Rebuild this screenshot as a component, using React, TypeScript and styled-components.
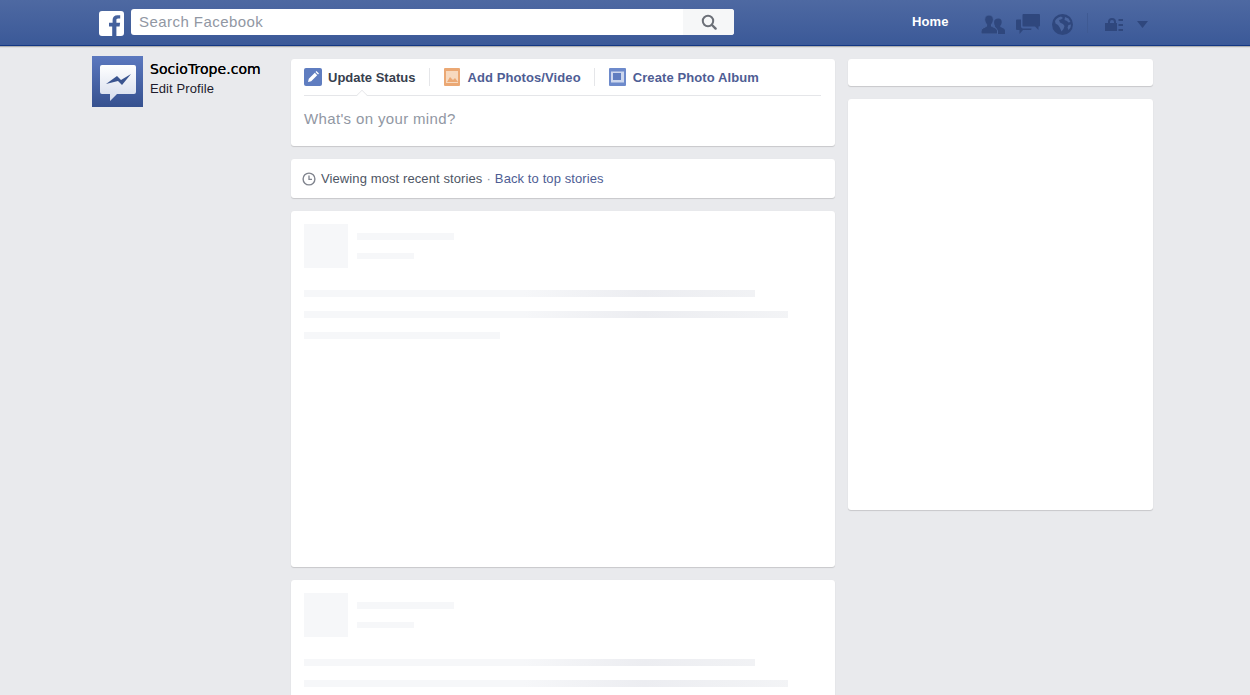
import React from 'react';
import styled, { createGlobalStyle } from 'styled-components';

const GlobalStyle = createGlobalStyle`
    html, body {
        margin: 0;
        padding: 0;
        background: #e9eaed;
        font-family: "Liberation Sans", Arial, sans-serif;
    }
`;

const Shell = styled.div`
    height: 695px;
    overflow: hidden;
`;

const Header = styled.header`
    height: 45px;
    padding-left: 99px;
    display: flex;
    align-items: center;
    background: linear-gradient(#4e69a2, #3b5998);
    border-bottom: 1px solid #133783;
    box-shadow: 0 1px 1px rgba(0, 0, 0, 0.25);
`;

const LogoWrap = styled.div`
    width: 25px;
    height: 25px;
    margin-top: 2px;
    margin-right: 7px;
`;

const Search = styled.div`
    width: 603px;
    height: 26px;
    margin-top: -1px;
    display: flex;
    background: #fff;
    border-radius: 3px;
    overflow: hidden;
`;

const SearchText = styled.div`
    flex: 1;
    padding-left: 8px;
    font-size: 15px;
    line-height: 26px;
    letter-spacing: 0.45px;
    color: #9197a3;
`;

const SearchButton = styled.div`
    width: 51px;
    display: flex;
    align-items: center;
    justify-content: center;
    background: #f6f7f8;
`;

const NavLink = styled.div`
    margin-left: 178px;
    margin-top: -3px;
    width: 69px;
    font-size: 13px;
    font-weight: bold;
    letter-spacing: 0.1px;
    color: #fff;
`;

const NavIcon = styled.div<{ $w: number; $gap: number }>`
    width: ${(p) => p.$w}px;
    margin-top: 3px;
    margin-right: ${(p) => p.$gap}px;
    display: flex;
    align-items: center;
    justify-content: center;
`;

const NavDivider = styled.div`
    width: 1px;
    height: 20px;
    margin-left: 14px;
    margin-right: 17px;
    background: #3f5a93;
`;

const Page = styled.main`
    display: grid;
    grid-template-columns: 186px 544px 305px;
    column-gap: 13px;
    padding: 10px 0 0 92px;
`;

const Sidebar = styled.aside`
    display: flex;
    gap: 7px;
`;

const Avatar = styled.div`
    width: 51px;
    height: 51px;
    padding-top: 2px;
    box-sizing: border-box;
    display: flex;
    align-items: center;
    justify-content: center;
    background: linear-gradient(#5b78bf, #36518f);
`;

const ProfileName = styled.div`
    font-family: "DejaVu Sans", Verdana, sans-serif;
    font-size: 14px;
    line-height: 16px;
    letter-spacing: 0.06px;
    margin-top: 5px;
    color: #000;
    text-shadow: 0 0 0.4px #000;
`;

const ProfileLink = styled.div`
    font-size: 13px;
    line-height: 15px;
    margin-top: 4px;
    letter-spacing: 0.1px;
    color: #1d1a2c;
`;

const Feed = styled.section`
    display: flex;
    flex-direction: column;
    gap: 13px;
    margin-top: 3px;
`;

const Card = styled.div<{ $h?: number }>`
    box-sizing: border-box;
    background: #fff;
    border-radius: 3px;
    box-shadow: 0 1px 1px rgba(0, 0, 0, 0.14), 0 0 1px rgba(0, 0, 0, 0.05);
    ${(p) => (p.$h ? `height: ${p.$h}px;` : '')}
`;

const Tabs = styled.div`
    position: relative;
    margin: 0 14px 0 13px;
    height: 36px;
    display: flex;
    align-items: center;
    border-bottom: 1px solid #e5e6e9;
`;

const Notch = styled.span`
    position: absolute;
    left: 53px;
    bottom: -1px;
    width: 9px;
    height: 9px;
    background: #fff;
    border-left: 1px solid #e5e6e9;
    border-top: 1px solid #e5e6e9;
    transform: translateY(4px) rotate(45deg) scale(0.75);
    transform-origin: center;
`;

const Tab = styled.div<{ $active?: boolean }>`
    display: flex;
    align-items: center;
    gap: ${(p) => (p.$active ? 6 : 7)}px;
    font-size: 13px;
    font-weight: bold;
    letter-spacing: ${(p) => (p.$active ? 0 : 0.1)}px;
    color: ${(p) => (p.$active ? '#373e4d' : '#4e5d94')};
`;

const TabDivider = styled.span<{ $l: number; $r: number }>`
    width: 1px;
    height: 18px;
    margin-left: ${(p) => p.$l}px;
    margin-right: ${(p) => p.$r}px;
    background: #e5e6e9;
`;

const Placeholder = styled.div`
    padding: 14px 13px 0;
    font-size: 15px;
    line-height: 18px;
    letter-spacing: 0.35px;
    color: #9197a3;
`;

const SortBar = styled.div`
    display: flex;
    align-items: center;
    height: 39px;
    padding: 0 11px;
    font-size: 13px;
    letter-spacing: 0.1px;
    color: #4e5665;
`;

const SortIcon = styled.span`
    display: flex;
    margin-right: 5px;
`;

const SortDot = styled.span`
    margin: 0 4px;
    color: #9197a3;
`;

const SortLink = styled.span`
    color: #4e5d94;
`;

const PostBody = styled.div`
    padding: 13px;
`;

const PostHead = styled.div`
    display: flex;
    gap: 9px;
`;

const Thumb = styled.div`
    width: 44px;
    height: 44px;
    background: #f6f7f9;
`;

const HeadLines = styled.div`
    padding-top: 9px;
    display: flex;
    flex-direction: column;
    gap: 13px;
`;

const Line = styled.div<{ $w: number }>`
    height: 6.5px;
    width: ${(p) => p.$w}px;
    background: linear-gradient(90deg, #f6f7f9 0, #f6f7f9 220px, #ecedf1 340px, #f3f4f6 490px);
`;

const PostLines = styled.div`
    margin-top: 22px;
    display: flex;
    flex-direction: column;
    gap: 14.5px;
`;

const Side = styled.aside`
    display: flex;
    flex-direction: column;
    gap: 13px;
    margin-top: 3px;
`;

const navFill = '#2f477d';

const FbLogo = () => (
    <svg width="25" height="25" viewBox="0 0 25 25">
        <path
            fill="#fff"
            d="M3 0h19a3 3 0 0 1 3 3v19a3 3 0 0 1-3 3h-4.6v-9.6h3.2l.5-3.7h-3.7V9.4c0-1.1.3-1.8 1.8-1.8h2V4.3c-.4 0-1.5-.1-2.8-.1-2.9 0-4.8 1.7-4.8 4.9v2.6H10v3.7h3.2V25H3a3 3 0 0 1-3-3V3a3 3 0 0 1 3-3z"
        />
    </svg>
);

const SearchGlyph = () => (
    <svg width="16" height="16" viewBox="0 0 16 16" fill="none">
        <circle cx="7" cy="7" r="5.2" stroke="#6c7078" strokeWidth="2" />
        <path d="M11 11l3.6 3.6" stroke="#6c7078" strokeWidth="2.4" strokeLinecap="round" />
    </svg>
);

const FriendsIcon = () => (
    <svg width="24" height="19" viewBox="0 0 24 19" fill={navFill}>
        <path d="M17.500 3.500c2.200 0 3.200 1.500 3.200 3.500 0 1.500-.6 3-1.400 3.800v1.300c1.500.6 4.700 1.600 4.700 3.600V19h-8v-5l-2-2.500V10.800c-.6-.8-.9-2.400-.9-3.800 0-2.100 1.400-3.500 4.400-3.500z" />
        <path
            stroke="#47639d"
            strokeWidth="1"
            d="M8 0c2.800 0 4.400 2 4.400 4.600 0 1.900-.8 3.600-1.900 4.700v2c2 .8 6 2.200 6 4.700V19H0v-3c0-2.500 4-3.900 5.600-4.700v-2C4.500 8.200 3.700 6.500 3.700 4.600 3.700 2 5.200 0 8 0z"
        />
    </svg>
);

const MessagesIcon = () => (
    <svg width="24" height="20" viewBox="0 0 24 20" fill={navFill}>
        <path d="M7.500 0H23a1 1 0 0 1 1 1v10.500a1 1 0 0 1-1 1h-.500V16l-3.500-3.500H7.500a1 1 0 0 1-1-1V1a1 1 0 0 1 1-1z" />
        <path d="M1 5.500h4v7a2 2 0 0 0 2 2h8.500V15a1 1 0 0 1-1 1H7l-3.500 4v-4H1a1 1 0 0 1-1-1V6.500a1 1 0 0 1 1-1z" />
    </svg>
);

const GlobeIcon = () => (
    <svg width="21" height="21" viewBox="0 0 21 21">
        <circle cx="10.500" cy="10.500" r="10.500" fill={navFill} />
        <path
            fill="#4a659e"
            d="M3 7c1-2 3-4 6-4.500L11 4 9 5.500 7 6l1 2.500 3 1.500 1.500 2-1 3-2 2.500-1.500-3.500L6 11 3.500 9.500zM13 3l3.500 1.500 2 3.500-2 .500L15 7l-2.500-1zM16.500 11l2.500-.500-.500 3-2 2.500-1-2.500z"
        />
    </svg>
);

const PrivacyIcon = () => (
    <svg width="18" height="13" viewBox="0 0 18 13" fill={navFill}>
        <path d="M3 5V4a4 4 0 0 1 8 0v1h1v8H0V5zm2 0h4V4a2 2 0 0 0-4 0z" />
        <path d="M13.500 1H18v2h-4.500zM13.500 6H18v2h-4.500zM13.500 11H18v2h-4.500z" />
    </svg>
);

const CaretIcon = () => (
    <svg width="11" height="7" viewBox="0 0 11 7" fill={navFill}>
        <path d="M0 0h11L5.500 7z" />
    </svg>
);

const MessengerMark = () => (
    <svg width="36" height="36" viewBox="0 0 36 36">
        <defs>
            <linearGradient id="bubble" x1="0" y1="0" x2="0" y2="1">
                <stop offset="0" stopColor="#ffffff" />
                <stop offset="1" stopColor="#d5dcec" />
            </linearGradient>
        </defs>
        <path
            fill="url(#bubble)"
            d="M2 0h32a2 2 0 0 1 2 2v25a2 2 0 0 1-2 2H17l-7 7v-7H2a2 2 0 0 1-2-2V2a2 2 0 0 1 2-2z"
        />
        <path fill="#3b5590" d="M6 19l11-8 4 4 10-6-9 11-4-4z" />
    </svg>
);

const PencilIcon = () => (
    <svg width="18" height="18" viewBox="0 0 18 18">
        <rect width="18" height="18" rx="2" fill="#5f7dc0" />
        <path fill="#fff" d="M4 14l.8-3.200 6-6 2.400 2.400-6 6zM11.500 4l1-1 2.500 2.500-1 1z" />
    </svg>
);

const PhotoIcon = () => (
    <svg width="16" height="18" viewBox="0 0 16 18">
        <rect width="16" height="18" rx="1" fill="#eba874" />
        <rect x="2" y="3" width="12" height="12" fill="#f7d9bf" />
        <path fill="#eba874" d="M3 14l3-5 3 3 2-2 3 4z" />
    </svg>
);

const AlbumIcon = () => (
    <svg width="17" height="18" viewBox="0 0 17 18">
        <rect width="17" height="18" rx="1" fill="#6d8acb" />
        <rect x="2" y="3.500" width="13" height="11" fill="#cdd7ee" />
        <rect x="4" y="5" width="8" height="7" fill="#5f7dc0" />
    </svg>
);

const ClockIcon = () => (
    <svg width="14" height="14" viewBox="0 0 14 14" fill="none">
        <circle cx="7" cy="7" r="5.900" stroke="#80848e" strokeWidth="1.400" />
        <path d="M7 3.500V7.300h3" stroke="#80848e" strokeWidth="1.300" />
    </svg>
);

const PostSkeleton: React.FC<{ height: number; lines: number[] }> = ({ height, lines }) => (
    <Card $h={height}>
        <PostBody>
            <PostHead>
                <Thumb />
                <HeadLines>
                    <Line $w={97} />
                    <Line $w={57} />
                </HeadLines>
            </PostHead>
            <PostLines>
                {lines.map((w) => (
                    <Line key={w} $w={w} />
                ))}
            </PostLines>
        </PostBody>
    </Card>
);

export default function App() {
    return (
        <Shell>
            <GlobalStyle />
            <Header>
                <LogoWrap>
                    <FbLogo />
                </LogoWrap>
                <Search>
                    <SearchText>Search Facebook</SearchText>
                    <SearchButton>
                        <SearchGlyph />
                    </SearchButton>
                </Search>
                <NavLink>Home</NavLink>
                <NavIcon $w={24} $gap={11}>
                    <FriendsIcon />
                </NavIcon>
                <NavIcon $w={24} $gap={12}>
                    <MessagesIcon />
                </NavIcon>
                <NavIcon $w={21} $gap={0}>
                    <GlobeIcon />
                </NavIcon>
                <NavDivider />
                <NavIcon $w={18} $gap={14}>
                    <PrivacyIcon />
                </NavIcon>
                <NavIcon $w={11} $gap={0}>
                    <CaretIcon />
                </NavIcon>
            </Header>
            <Page>
                <Sidebar>
                    <Avatar>
                        <MessengerMark />
                    </Avatar>
                    <div>
                        <ProfileName>SocioTrope.com</ProfileName>
                        <ProfileLink>Edit Profile</ProfileLink>
                    </div>
                </Sidebar>
                <Feed>
                    <Card $h={87}>
                        <Tabs>
                            <Tab $active>
                                <PencilIcon />
                                Update Status
                            </Tab>
                            <TabDivider $l={14} $r={14} />
                            <Tab>
                                <PhotoIcon />
                                Add Photos/Video
                            </Tab>
                            <TabDivider $l={13} $r={14} />
                            <Tab>
                                <AlbumIcon />
                                Create Photo Album
                            </Tab>
                            <Notch />
                        </Tabs>
                        <Placeholder>What's on your mind?</Placeholder>
                    </Card>
                    <Card>
                        <SortBar>
                            <SortIcon>
                                <ClockIcon />
                            </SortIcon>
                            Viewing most recent stories
                            <SortDot>·</SortDot>
                            <SortLink>Back to top stories</SortLink>
                        </SortBar>
                    </Card>
                    <PostSkeleton height={356} lines={[451, 484, 196]} />
                    <PostSkeleton height={356} lines={[451, 484, 196]} />
                </Feed>
                <Side>
                    <Card $h={27} />
                    <Card $h={411} />
                </Side>
            </Page>
        </Shell>
    );
}
